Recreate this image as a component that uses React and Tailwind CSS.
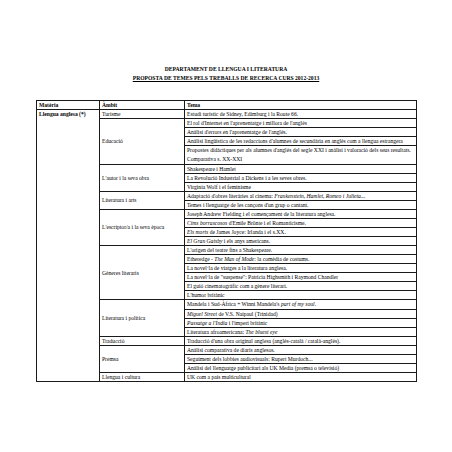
import React from "react";

// temes grouped by àmbit; italic parts as in the original document
const groups = [
  {
    ambit: "Turisme",
    temes: [<>Estudi turístic de Sidney, Edimburg i la Route 66.</>],
  },
  {
    ambit: "Educació",
    temes: [
      <>El rol d'Internet en l'aprenentatge i millora de l'anglès</>,
      <>Anàlisi d'errors en l'aprenentatge de l'anglès.</>,
      <>Anàlisi lingüística de les redaccions d'alumnes de secundària en anglès com a llengua estrangera</>,
      <>
        Propostes didàctiques per als alumnes d'anglès del segle XXI i anàlisi i valoració dels seus resultats.
        <br />
        Comparativa s. XX-XXI
      </>,
    ],
  },
  {
    ambit: "L'autor i la seva obra",
    temes: [
      <>Shakespeare i Hamlet</>,
      <>La Revolució Industrial a Dickens i a les seves obres.</>,
      <>Virginia Wolf i el feminisme</>,
    ],
  },
  {
    ambit: "Literatura i arts",
    temes: [
      <>
        Adaptació d'obres literàries al cinema: <i>Frankenstein, Hamlet, Romeo i Julieta</i>...
      </>,
      <>Temes i llenguatge de les cançons d'un grup o cantant.</>,
    ],
  },
  {
    ambit: "L'escriptor/a i la seva època",
    temes: [
      <>Joseph Andrew Fielding i el començament de la literatura anglesa.</>,
      <>
        <i>Cims borrascosos</i> d'Emile Brönte i el Romanticisme.
      </>,
      <>
        <i>Els morts</i> de James Joyce: Irlanda i el s.XX.
      </>,
      <>
        <i>El Gran Gatsby</i> i els anys americans.
      </>,
    ],
  },
  {
    ambit: "Gèneres literaris",
    temes: [
      <>L'origen del teatre fins a Shakespeare.</>,
      <>
        Etheredge - <i>The Man of Mode</i>: la comèdia de costums.
      </>,
      <>La novel·la de viatges a la literatura anglesa.</>,
      <>La novel·la de "suspense": Patricia Highsmith i Raymond Chandler</>,
      <>El guió cinematogràfic com a gènere literari.</>,
      <>L'humor britànic</>,
    ],
  },
  {
    ambit: "Literatura i política",
    temes: [
      <>
        Mandela i Sud-Àfrica + Winni Mandela's <i>part of my soul.</i>
      </>,
      <>
        <i>Miguel Street</i> de V.S. Naipaul (Trinidad)
      </>,
      <>
        <i>Passatge a l'Índia</i> i l'imperi britànic
      </>,
      <>
        Literatura afroamericana: <i>The bluest eye</i>
      </>,
    ],
  },
  {
    ambit: "Traducció",
    temes: [<>Traducció d'una obra original anglesa (anglès-català / català-anglès).</>],
  },
  {
    ambit: "Premsa",
    temes: [
      <>Anàlisi comparativa de diaris anglesos.</>,
      <>Seguiment dels lobbies audiovisuals: Rupert Murdoch...</>,
      <>Anàlisi del llenguatge publicitari als UK Media (premsa o televisió)</>,
    ],
  },
  {
    ambit: "Llengua i cultura",
    temes: [<>UK com a país multicultural</>],
  },
];

const totalTemes = groups.reduce((n, g) => n + g.temes.length, 0);

const cell = "border border-[#1a1a1a] px-[2px] py-0 leading-[8.06px] whitespace-nowrap overflow-hidden";

export default function App() {
  return (
    <div className="w-[452px] h-[452px] bg-white text-black font-['Liberation_Serif',serif] text-[5.6px]">
      <div className="pt-[65px] text-center font-bold leading-[8.5px]">
        <p>DEPARTAMENT DE LLENGUA I LITERATURA</p>
        <p className="underline">PROPOSTA DE TEMES PELS TREBALLS DE RECERCA CURS 2012-2013</p>
      </div>

      <table className="mt-[18px] ml-[36px] w-[380px] table-fixed border-collapse">
        <colgroup>
          <col className="w-[63px]" />
          <col className="w-[85px]" />
          <col className="w-[232px]" />
        </colgroup>
        <thead>
          <tr className="font-bold text-left">
            <th className={cell + " font-bold"}>Matèria</th>
            <th className={cell + " font-bold"}>Àmbit</th>
            <th className={cell + " font-bold"}>Tema</th>
          </tr>
        </thead>
        <tbody>
          {groups.map((g, gi) =>
            g.temes.map((tema, ti) => (
              <tr key={gi + "-" + ti}>
                {gi === 0 && ti === 0 && (
                  <td rowSpan={totalTemes} className={cell + " align-top font-bold"}>
                    Llengua anglesa (*)
                  </td>
                )}
                {ti === 0 && (
                  <td rowSpan={g.temes.length} className={cell + " align-middle"}>
                    {g.ambit}
                  </td>
                )}
                <td className={cell + (gi === 1 && ti === 3 ? " leading-[8.6px]" : "")}>{tema}</td>
              </tr>
            ))
          )}
        </tbody>
      </table>
    </div>
  );
}
